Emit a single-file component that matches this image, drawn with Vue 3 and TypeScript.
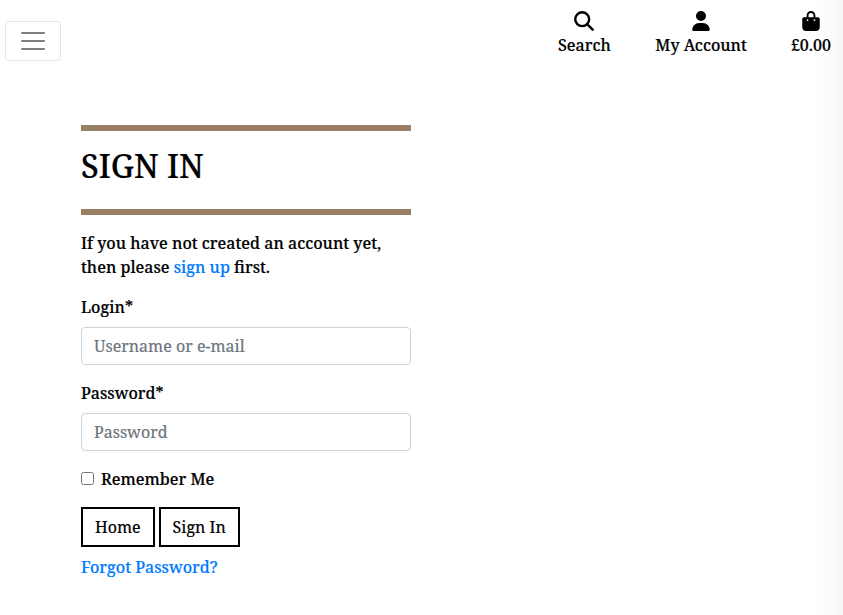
<script setup lang="ts">
import { ref } from 'vue'

const login = ref<string>('')
const password = ref<string>('')
const remember = ref<boolean>(false)
</script>

<template>
  <div class="page">
    <header class="topbar">
      <button class="toggler" type="button" aria-label="Toggle navigation">
        <svg width="30" height="30" viewBox="0 0 30 30" fill="none" stroke="rgba(0,0,0,0.5)" stroke-width="2" stroke-linecap="round">
          <path d="M4 7h22M4 15h22M4 23h22" />
        </svg>
      </button>
      <nav class="tools">
        <a class="tool search" href="#">
          <svg width="20" height="20" viewBox="0 0 20 20" fill="none" stroke="currentColor" stroke-width="2.4" stroke-linecap="round">
            <circle cx="8.2" cy="8.2" r="6.95" />
            <path d="M13.300 13.300L18.700 18.700" />
          </svg>
          <span>Search</span>
        </a>
        <a class="tool account" href="#">
          <svg width="18" height="20" viewBox="0 0 448 512" fill="currentColor">
            <path d="M224 256A128 128 0 1 0 224 0a128 128 0 1 0 0 256zm-45.700 48C79.800 304 0 383.800 0 482.300C0 498.700 13.300 512 29.700 512H418.300c16.400 0 29.700-13.300 29.700-29.700C448 383.800 368.200 304 269.700 304H178.300z" />
          </svg>
          <span>My Account</span>
        </a>
        <a class="tool basket" href="#">
          <svg width="18" height="20" viewBox="0 0 448 512" fill="currentColor">
            <path d="M160 112c0-35.300 28.700-64 64-64s64 28.700 64 64v48H160V112zm-48 48H48c-26.500 0-48 21.500-48 48V416c0 53 43 96 96 96H352c53 0 96-43 96-96V208c0-26.500-21.500-48-48-48H336V112C336 50.100 285.900 0 224 0S112 50.100 112 112v48zm24 48a24 24 0 1 1 0 48 24 24 0 1 1 0-48zm152 24a24 24 0 1 1 48 0 24 24 0 1 1-48 0z" />
          </svg>
          <span>£0.00</span>
        </a>
      </nav>
    </header>

    <main class="content">
      <h1 class="title">SIGN IN</h1>
      <p class="intro">If you have not created an account yet,<br />then please <a href="#">sign up</a> first.</p>
      <form @submit.prevent>
        <label for="login">Login*</label>
        <input id="login" v-model="login" class="field" type="text" placeholder="Username or e-mail" />
        <label for="password">Password*</label>
        <input id="password" v-model="password" class="field" type="password" placeholder="Password" />
        <div class="remember">
          <input id="remember" v-model="remember" type="checkbox" />
          <label for="remember">Remember Me</label>
        </div>
        <div class="actions">
          <button type="button">Home</button>
          <button type="submit">Sign In</button>
        </div>
        <a class="forgot" href="#">Forgot Password?</a>
      </form>
    </main>
  </div>
</template>

<style>
body {
  margin: 0;
  background: #fff;
}
</style>

<style scoped>
.page {
  box-sizing: border-box;
  height: 615px;
  overflow: hidden;
  font: 500 16px/24px 'Noto Serif', serif;
  color: #000;
  -webkit-text-stroke: 0.2px;
  background: linear-gradient(to left, #f6f6f6, #fcfcfc 14px, #fefefe 27px, #fff 36px) no-repeat;
}
.page * {
  box-sizing: border-box;
}
.topbar {
  display: flex;
  align-items: flex-start;
  justify-content: space-between;
  height: 125px;
  padding: 11px 12px 0 5px;
}
.toggler {
  display: flex;
  align-items: center;
  justify-content: center;
  width: 56px;
  height: 40px;
  margin: 10px 0 0;
  padding: 0;
  border: 1px solid rgba(0, 0, 0, 0.1);
  border-radius: 4px;
  background: transparent;
}
.tools {
  display: flex;
  gap: 44px;
}
.tool {
  display: flex;
  flex-direction: column;
  align-items: center;
  gap: 2px;
  color: #000;
}
.search {
  margin-right: 0.5px;
}
.tool svg {
  display: block;
}
a {
  color: #007bff;
  text-decoration: none;
}
.content {
  width: 330px;
  margin-left: 81px;
}
.title {
  height: 90px;
  margin: 0 0 16px;
  padding-top: 16px;
  border-top: 6px solid #997f63;
  border-bottom: 6px solid #997f63;
  font-size: 32px;
  font-weight: 500;
  line-height: 38px;
}
.intro {
  margin: 0 0 16px;
  white-space: nowrap;
}
form > label {
  display: block;
  margin-bottom: 8px;
}
.field {
  display: block;
  width: 100%;
  height: 38px;
  margin: 0 0 16px;
  padding: 6px 12px;
  border: 1px solid #ced4da;
  border-radius: 4px;
  background: #fff;
  color: #495057;
  font: 400 16px/24px 'Noto Serif', serif;
}
.field::placeholder {
  color: #6c757d;
  opacity: 1;
}
.remember {
  display: flex;
  align-items: flex-start;
  gap: 7px;
  margin-bottom: 16px;
}
.remember input {
  width: 13px;
  height: 13px;
  margin: 5px 0 0;
}
.actions {
  display: flex;
  gap: 4px;
  margin-bottom: 8px;
}
.actions button {
  height: 40px;
  padding: 6px 12px;
  border: 2px solid #000;
  background: #fff;
  color: #000;
  font: 400 16px/24px 'Noto Serif', serif;
}
.forgot {
  display: block;
}
</style>
